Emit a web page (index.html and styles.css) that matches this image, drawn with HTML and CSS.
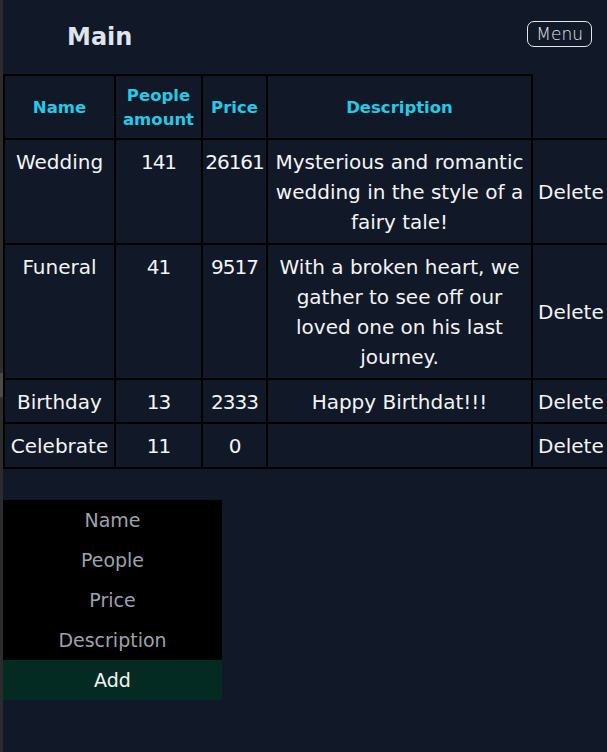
FILE: index.html
```html
<!DOCTYPE html>
<html lang="en">
<head>
<meta charset="utf-8">
<title>Main</title>
<link rel="stylesheet" href="styles.css">
</head>
<body>
  <header class="topbar">
    <h1 class="title">Main</h1>
    <button class="menu-btn" type="button">Menu</button>
  </header>
  <table class="events">
    <colgroup>
      <col class="c-name"><col class="c-people"><col class="c-price"><col class="c-desc"><col class="c-del">
    </colgroup>
    <thead>
      <tr>
        <th>Name</th>
        <th>People amount</th>
        <th>Price</th>
        <th>Description</th>
      </tr>
    </thead>
    <tbody>
      <tr>
        <td>Wedding</td><td class="num">141</td><td class="num">26161</td>
        <td>Mysterious and romantic wedding in the style of a fairy tale!</td>
        <td class="del">Delete</td>
      </tr>
      <tr>
        <td>Funeral</td><td class="num">41</td><td class="num">9517</td>
        <td>With a broken heart, we gather to see off our loved one on his last journey.</td>
        <td class="del">Delete</td>
      </tr>
      <tr>
        <td>Birthday</td><td class="num">13</td><td class="num">2333</td>
        <td>Happy Birthdat!!!</td>
        <td class="del">Delete</td>
      </tr>
      <tr>
        <td>Celebrate</td><td class="num">11</td><td class="num">0</td>
        <td></td>
        <td class="del">Delete</td>
      </tr>
    </tbody>
  </table>
  <form class="add-form">
    <input class="field" type="text" placeholder="Name">
    <input class="field" type="text" placeholder="People">
    <input class="field" type="text" placeholder="Price">
    <input class="field" type="text" placeholder="Description">
    <button class="add-btn" type="button">Add</button>
  </form>
</body>
</html>
```
FILE: styles.css
```css
html, body {
  overflow: hidden;
}
body {
  margin: 0;
  min-height: 752px;
  padding-left: 3px;
  background:
    linear-gradient(#4a4a4a, #4a4a4a) 0 373px / 3px 24px no-repeat,
    linear-gradient(#2c2c2c, #2c2c2c) 0 0 / 3px 100% no-repeat,
    #111827;
  font-family: "DejaVu Sans", "Open Sans", sans-serif;
  color: #f3f4f6;
}
.topbar {
  display: flex;
  justify-content: space-between;
  align-items: flex-start;
  height: 74px;
  padding-left: 64px;
  padding-right: 15px;
}
.title {
  margin: 21px 0 0;
  font-size: 24px;
  line-height: 32px;
  font-weight: 700;
  color: #dfe4ee;
}
.menu-btn {
  margin-top: 21px;
  height: 26px;
  padding: 0 8px;
  border: 1px solid #e5e7eb;
  border-radius: 7px;
  background: transparent;
  color: #e5e7eb;
  font-family: inherit;
  font-size: 17px;
  font-weight: 300;
  line-height: 22px;
}
.events {
  border-collapse: collapse;
  table-layout: fixed;
  width: 620px;
}
.c-name { width: 111px; }
.c-people { width: 87px; }
.c-price { width: 65px; }
.c-desc { width: 265px; }
.c-del { width: 92px; }
.events th,
.events td {
  border: 2px solid #000;
  text-align: center;
}
.events th {
  padding: 8px 2px 6px;
  font-size: 16.5px;
  line-height: 24px;
  font-weight: 700;
  color: #22cbe8;
}
.events td {
  padding: 7px 3px 5.75px;
  font-size: 20px;
  line-height: 30px;
  vertical-align: top;
}
.events td.num {
  padding-left: 0;
  padding-right: 0;
  letter-spacing: -1px;
}
.events td.del {
  vertical-align: middle;
  text-align: left;
  padding-left: 5px;
}
.add-form {
  display: flex;
  flex-direction: column;
  width: 219px;
  margin-top: 31px;
  background: #000;
}
.field {
  height: 40px;
  border: 0;
  padding: 0;
  background: transparent;
  text-align: center;
  font-family: inherit;
  font-size: 19px;
  color: #e5e7eb;
  outline: none;
}
.field::placeholder {
  color: #9ca3af;
}
.add-btn {
  height: 40px;
  border: 0;
  background: #042b22;
  color: #f3f4f6;
  font-family: inherit;
  font-size: 19px;
}
```
